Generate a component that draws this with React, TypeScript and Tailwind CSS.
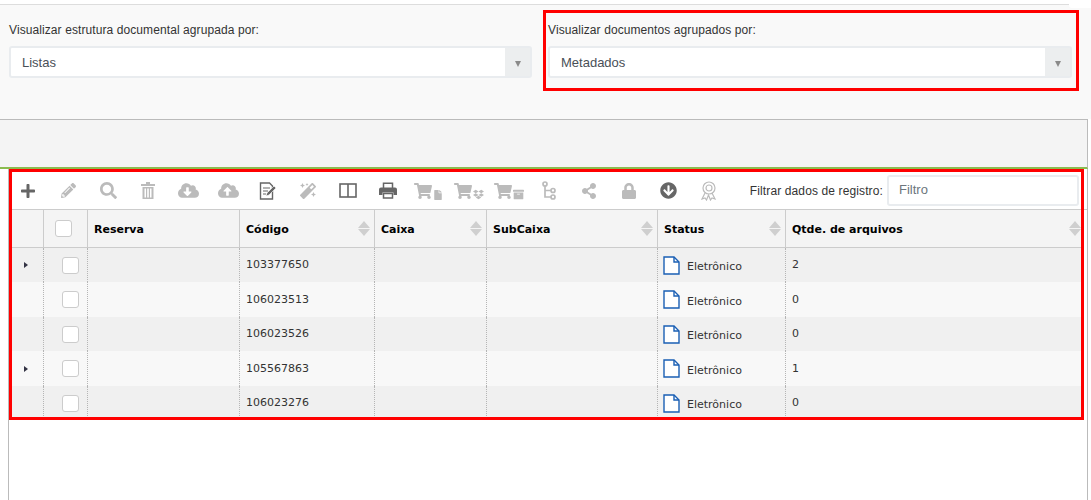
import React from "react";
import {
  FaPlus, FaPencilAlt, FaSearch, FaCloudDownloadAlt, FaCloudUploadAlt, FaMagic,
  FaShoppingCart, FaFile, FaDropbox, FaArchive, FaShareAlt, FaLock, FaArrowCircleDown,
} from "react-icons/fa";

const ui = "font-['Liberation_Sans',Arial,sans-serif]";

function Trash() {
  return (
    <svg width="14" height="17" viewBox="0 0 14 17" fill="#bbbbbb">
      <rect x="0" y="2" width="14" height="2" />
      <rect x="5" y="0" width="4" height="2" />
      <path d="M1.5 5h11v12h-11z M3.5 6.5v9h1.5v-9z M6.2 6.5v9h1.6v-9z M9 6.5v9h1.5v-9z" fillRule="evenodd" />
    </svg>
  );
}

function EditDoc() {
  return (
    <svg width="18" height="18" viewBox="0 0 18 18">
      <path d="M1.5 1h9l3 3v13h-12z" fill="none" stroke="#666" strokeWidth="1.4" />
      <path d="M4 6h7M4 9h5M4 12h3" stroke="#666" strokeWidth="1.2" />
      <path d="M7 14l1-3 7-7 2 2-7 7z" fill="#666" stroke="#fff" strokeWidth=".6" />
    </svg>
  );
}

function Columns() {
  return (
    <svg width="18" height="15" viewBox="0 0 18 15" fill="none" stroke="#666" strokeWidth="1.6">
      <rect x="1" y="1" width="16" height="13" />
      <path d="M9 1v13" />
    </svg>
  );
}

function Printer() {
  return (
    <svg width="18" height="17" viewBox="0 0 18 17">
      <path d="M4.500 6V1.200h9V6" fill="none" stroke="#666" strokeWidth="1.500" />
      <path d="M2 5.500h14a2 2 0 0 1 2 2V13h-3.500v-2.500h-11V13H0V7.500a2 2 0 0 1 2-2z" fill="#666" />
      <path d="M4.500 11.500h9v4.500h-9z" fill="none" stroke="#666" strokeWidth="1.500" />
    </svg>
  );
}

function Tree() {
  return (
    <svg width="14" height="19" viewBox="0 0 14 19" fill="none" stroke="#bbbbbb" strokeWidth="1.7">
      <circle cx="3" cy="3" r="2" />
      <circle cx="11" cy="9.5" r="2" />
      <circle cx="11" cy="16" r="2" />
      <path d="M3 5v11h6M3 9.5h6" />
    </svg>
  );
}

function AwardIcon() {
  return (
    <svg width="16" height="20" viewBox="0 0 16 20" fill="none" stroke="#bbbbbb" strokeWidth="1.2">
      <circle cx="8" cy="7" r="6" />
      <circle cx="8" cy="7" r="3" />
      <path d="M4 12l-3 6 3-1 1.500 2 2-5 2 5 1.500-2 3 1-3-6" />
    </svg>
  );
}

function Cart({ extra }: { extra: React.ReactNode }) {
  return (
    <span className="flex items-end gap-[1px]">
      <FaShoppingCart size={18} color="#bbbbbb" />
      {extra}
    </span>
  );
}

function FileIcon() {
  return (
    <svg width="17" height="19" viewBox="0 0 17 19" fill="#fff" stroke="#1a5fb4" strokeWidth="1.400" className="shrink-0">
      <path d="M1 1h10l5 5v12h-15z" />
      <path d="M11 1v5h5" fill="none" />
    </svg>
  );
}

function SortIcon() {
  return (
    <span className="flex flex-col gap-[1px] shrink-0">
      <span className="w-0 h-0 border-x-[6px] border-x-transparent border-b-[7px] border-b-[#cfcfcf]" />
      <span className="w-0 h-0 border-x-[6px] border-x-transparent border-t-[7px] border-t-[#cfcfcf]" />
    </span>
  );
}

function Select({ value }: { value: string }) {
  return (
    <div className="flex h-[32px] border-2 border-[#e9ecef] rounded-[3px] bg-white">
      <div className="flex-1 flex items-center pl-[11px] pt-[1px] text-[13px] text-[#495057]">{value}</div>
      <div className="w-[25px] bg-[#eceeef] flex items-center justify-center pt-[3px]">
        <span className="w-0 h-0 border-x-[3.500px] border-x-transparent border-t-[6px] border-t-[#8a8a8a]" />
      </div>
    </div>
  );
}

const tools: React.ReactNode[] = [
  <FaPlus size={16} color="#666666" />,
  <FaPencilAlt size={15} color="#bbbbbb" />,
  <FaSearch size={17} color="#bbbbbb" />,
  <Trash />,
  <FaCloudDownloadAlt size={21} color="#bbbbbb" />,
  <FaCloudUploadAlt size={21} color="#bbbbbb" />,
  <EditDoc />,
  <FaMagic size={16} color="#bbbbbb" />,
  <Columns />,
  <Printer />,
  <Cart extra={<FaFile size={10} color="#bbbbbb" />} />,
  <Cart extra={<FaDropbox size={11} color="#bbbbbb" />} />,
  <Cart extra={<FaArchive size={11} color="#bbbbbb" />} />,
  <Tree />,
  <FaShareAlt size={16} color="#bbbbbb" />,
  <FaLock size={16} color="#bbbbbb" />,
  <FaArrowCircleDown size={17} color="#666666" />,
  <AwardIcon />,
];

const cols = "grid grid-cols-[35px_44px_152px_135px_112px_171px_128px_1fr]";

const headers = ["Reserva", "Código", "Caixa", "SubCaixa", "Status", "Qtde. de arquivos"];

const rows = [
  { code: "103377650", qty: "2", caret: true, h: "h-[34px]", bg: "bg-[#f0f0f0]" },
  { code: "106023513", qty: "0", caret: false, h: "h-[35px]", bg: "bg-[#f8f8f8]" },
  { code: "106023526", qty: "0", caret: false, h: "h-[34px]", bg: "bg-[#f0f0f0]" },
  { code: "105567863", qty: "1", caret: true, h: "h-[35px]", bg: "bg-[#f8f8f8]" },
  { code: "106023276", qty: "0", caret: false, h: "h-[34px]", bg: "bg-[#f0f0f0]" },
];

const dotted = "border-r border-dotted border-r-[#b5b5b5]";

export default function App() {
  return (
    <div className={`relative w-[1091px] h-[500px] overflow-hidden bg-white ${ui}`}>
      <div className="h-[5px] border-b border-[#dddddd]" />
      <div className="h-[114px] bg-[#f9f9f9] grid grid-cols-[523px_524px] gap-x-[16px] pl-[9px] pt-[18px]">
        <div>
          <div className="h-[23px] text-[12px] leading-[14px] tracking-[0.09px] text-[#333333]">Visualizar estrutura documental agrupada por:</div>
          <Select value="Listas" />
        </div>
        <div>
          <div className="h-[23px] text-[12px] leading-[14px] tracking-[0.09px] text-[#333333]">Visualizar documentos agrupados por:</div>
          <Select value="Metadados" />
        </div>
      </div>

      <div className="w-[1088px] h-[50px] bg-[#f4f4f4] border-t border-r border-t-[#bbbbbb] border-r-[#bbbbbb] border-b-2 border-b-[#8bbc4f]" />

      <div className="ml-[8px] w-[1080px] h-[331px] border-x border-x-[#bbbbbb] bg-white">
        <div className="h-[41px] flex items-center border-b border-[#cccccc] pt-[3px]">
          <div className="flex items-center -ml-px">
            {tools.map((t, i) => (
              <span key={i} className="w-[40.060px] flex items-center justify-center">{t}</span>
            ))}
          </div>
          <span className="ml-auto text-[12px] tracking-[0.12px] text-[#333333] mr-[4px]">Filtrar dados de registro:</span>
          <div className="w-[192px] h-[31px] mr-[8px] border-2 border-[#e9ecef] rounded-[3px] flex items-center pl-[10px] pb-[1px] text-[13px] text-[#6c757d]">
            Filtro
          </div>
        </div>

        <div className="font-['DejaVu_Sans',Verdana,sans-serif] pr-[3px]">
          <div className={`${cols} h-[38px] bg-[#f4f4f4] border-b border-[#cccccc]`}>
            <div className="border-r border-[#cccccc]" />
            <div className="border-r border-[#cccccc] flex items-center pl-[11px]">
              <span className="w-[17px] h-[17px] bg-white border border-[#cccccc] rounded-[3px]" />
            </div>
            {headers.map((h, i) => (
              <div key={h} className={`${i < 5 ? "border-r border-[#cccccc] pr-[4px]" : "pr-[3px]"} flex items-center justify-between pl-[6px] text-[11px] font-bold text-black`}>
                <span className="pt-[3px]">{h}</span>
                {i > 0 && <SortIcon />}
              </div>
            ))}
          </div>

          {rows.map((r) => (
            <div key={r.code} className={`${cols} ${r.h} ${r.bg} text-[11px] text-[#333333]`}>
              <div className={`${dotted} flex items-center pl-[15px]`}>
                {r.caret && <span className="w-0 h-0 border-y-[3px] border-y-transparent border-l-[4px] border-l-[#333344]" />}
              </div>
              <div className={`${dotted} flex items-center pl-[18px]`}>
                <span className="w-[17px] h-[17px] bg-white border border-[#cccccc] rounded-[3px]" />
              </div>
              <div className={dotted} />
              <div className={`${dotted} flex items-center pl-[6px] pt-[1px]`}>{r.code}</div>
              <div className={dotted} />
              <div className={dotted} />
              <div className={`${dotted} flex items-center pl-[5px] gap-[7px]`}>
                <FileIcon />
                <span className="pt-[5px]">Eletrônico</span>
              </div>
              <div className="flex items-center pl-[6px] pt-[1px]">{r.qty}</div>
            </div>
          ))}
        </div>
      </div>

      <div className="absolute left-[1069px] top-0 w-[22px] h-[8px] bg-white rounded-bl-[3px]" />
      <div className="absolute left-[543px] top-[10px] w-[536px] h-[81px] border-[3px] border-[#ff0000] pointer-events-none" />
      <div className="absolute left-[9px] top-[169px] w-[1075px] h-[251px] border-[3px] border-[#ff0000] pointer-events-none" />
    </div>
  );
}
